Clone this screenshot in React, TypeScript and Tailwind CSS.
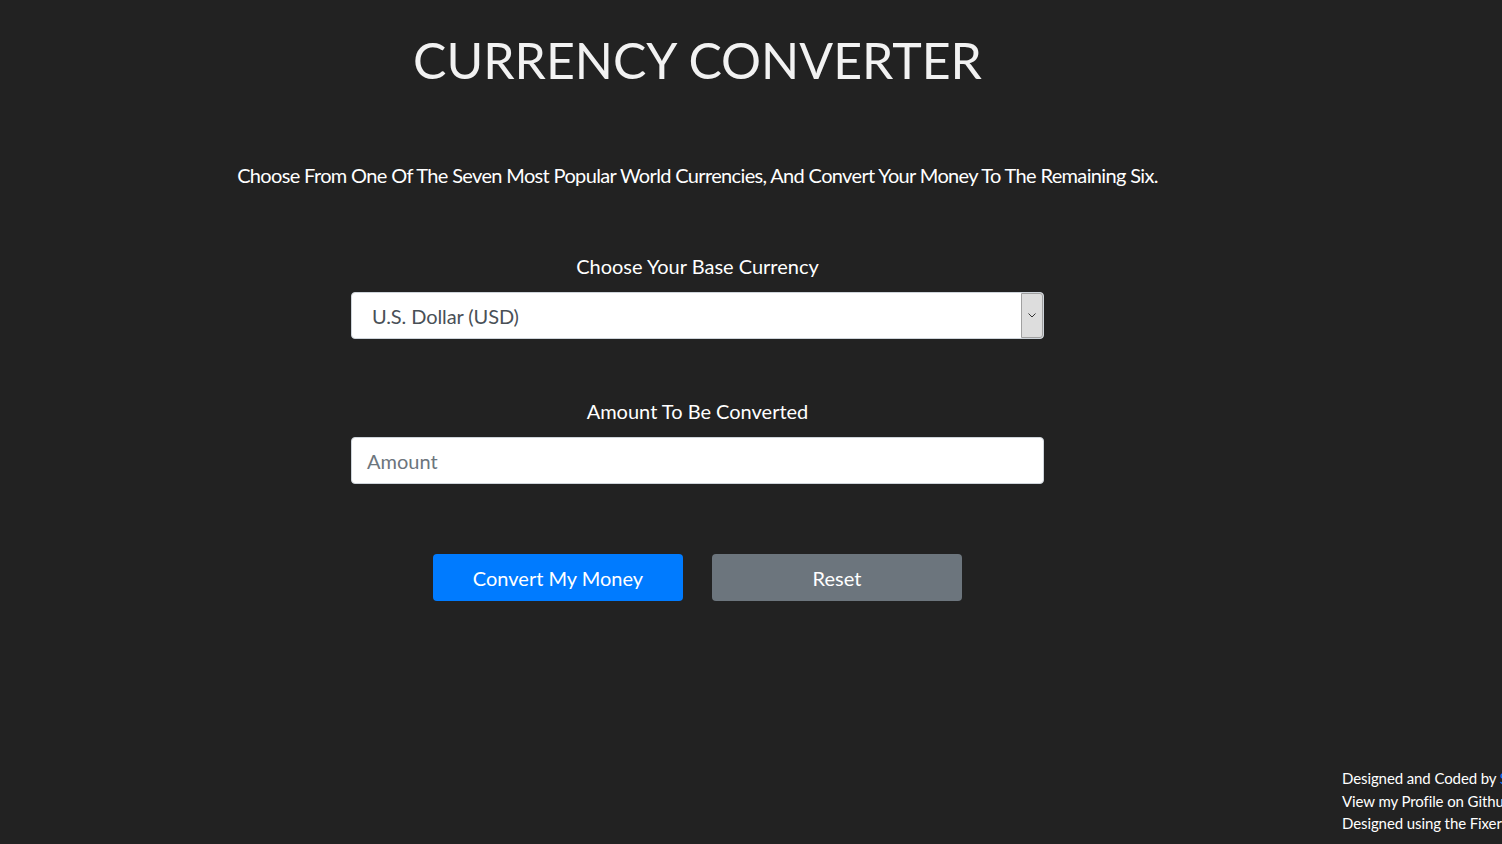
import React from "react";

export default function App() {
  return (
    <div
      className="relative h-[844px] w-[1502px] overflow-hidden bg-[#222222] text-[#f2f2f2]"
      style={{ fontFamily: "Lato, 'Noto Sans', sans-serif" }}
    >
      <div className="flex w-[1395px] flex-col items-center">
        <h1 className="mt-[27px] text-[50px] font-normal leading-[66px] text-[#f2f2f2]">CURRENCY CONVERTER</h1>
        <p className="mt-[70px] text-[20px] leading-[24px] tracking-[-0.65px] text-white">
          Choose From One Of The Seven Most Popular World Currencies, And Convert Your Money To The Remaining Six.
        </p>
        <label className="mt-[67px] text-[20px] leading-[24px] text-white">Choose Your Base Currency</label>
        <div className="mt-[14px] flex h-[47px] w-[693px] items-stretch rounded-[4px] border border-[#ced4da] bg-white">
          <div className="flex flex-1 items-center pl-[20px] text-[20px] tracking-[-0.1px] text-[#495057]">U.S. Dollar (USD)</div>
          <div className="flex w-[22px] items-center justify-center rounded-r-[3px] border border-[#a0a0a0] bg-[#dddddd]">
            <svg width="8" height="5" viewBox="0 0 8 5">
              <path d="M0.5 0.5 L4 4 L7.5 0.5" fill="none" stroke="#333" strokeWidth="1" />
            </svg>
          </div>
        </div>
        <label className="mt-[60px] text-[20px] leading-[24px] text-white">Amount To Be Converted</label>
        <div className="mt-[14px] flex h-[47px] w-[693px] items-center rounded-[4px] border border-[#ced4da] bg-white pl-[15px] text-[20px] text-[#6c757d]">
          Amount
        </div>
        <div className="mt-[70px] flex gap-[29px]">
          <button className="h-[47px] w-[250px] rounded-[4px] bg-[#007bff] text-[20px] text-white">Convert My Money</button>
          <button className="h-[47px] w-[250px] rounded-[4px] bg-[#6c757d] text-[20px] text-white">Reset</button>
        </div>
      </div>
      <div className="absolute left-[1342px] top-[767px] w-[260px] whitespace-nowrap text-[15px] leading-[22.5px] tracking-[-0.1px] text-white">
        <div>
          Designed and Coded by <span className="text-[#007bff]">Someone</span>
        </div>
        <div>View my Profile on Github</div>
        <div>Designed using the Fixer API</div>
      </div>
    </div>
  );
}
